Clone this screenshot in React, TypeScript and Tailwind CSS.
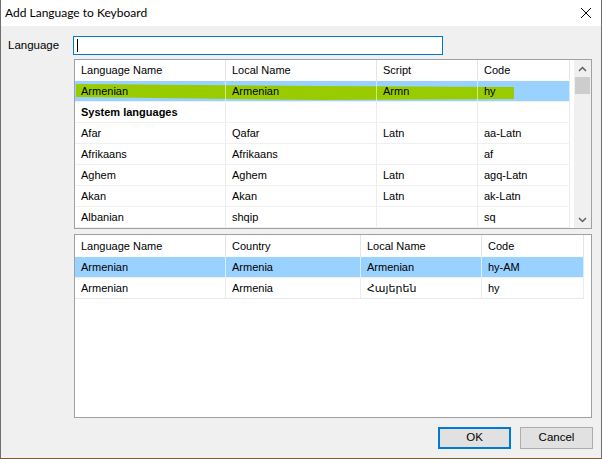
import React from "react";

const F = { fontFamily: '"Liberation Sans", "DejaVu Sans", Arial, sans-serif' };

function Cell({ w, children, bold }: { w: number; children?: React.ReactNode; bold?: boolean }) {
  return (
    <div
      className={`h-full shrink-0 flex items-center pl-[6px] whitespace-nowrap overflow-hidden border-r border-r-[rgba(200,200,200,0.35)] ${bold ? "font-bold" : ""}`}
      style={{ width: w }}
    >
      {children}
    </div>
  );
}

function HeaderCell({ w, children }: { w: number; children?: React.ReactNode }) {
  return (
    <div
      className="h-full shrink-0 flex items-center pl-[6px] whitespace-nowrap border-r border-r-[#e5e5e5]"
      style={{ width: w }}
    >
      {children}
    </div>
  );
}

const upperCols = [151, 151, 101, 92];
const lowerCols = [151, 135, 121, 102];

const upperRows: (string[] | { bold: string })[] = [
  { bold: "System languages" },
  ["Afar", "Qafar", "Latn", "aa-Latn"],
  ["Afrikaans", "Afrikaans", "", "af"],
  ["Aghem", "Aghem", "Latn", "agq-Latn"],
  ["Akan", "Akan", "Latn", "ak-Latn"],
  ["Albanian", "shqip", "", "sq"],
];

export default function App() {
  return (
    <div
      className="w-[602px] h-[459px] flex flex-col bg-[#f0f0f0] border-l border-r border-[#6e6e6e] border-b border-b-[#7a5b34] text-[11px] text-black overflow-hidden"
      style={F}
    >
      {/* Title bar */}
      <div className="h-[26px] bg-white flex items-center justify-between shrink-0">
        <span className="pl-[4px] text-[12px] text-black" style={{ fontFamily: 'Lato, "Noto Sans", sans-serif' }}>
          Add Language to Keyboard
        </span>
        <svg width="12" height="12" viewBox="0 0 12 12" className="mr-[9px]">
          <path d="M1 1 L11 11 M11 1 L1 11" stroke="#000" strokeWidth="1" />
        </svg>
      </div>

      {/* Body */}
      <div className="flex-1 flex flex-col pt-[10px]">
        <div className="flex items-center h-[19px]">
          <span className="w-[72px] pl-[7px] shrink-0 text-[11.5px]">Language</span>
          <div className="w-[370px] h-[19px] bg-white border border-[#0078d7] flex items-center pl-[3px]">
            <div className="w-px h-[13px] bg-black" />
          </div>
        </div>

        {/* Upper list */}
        <div className="mt-[4px] ml-[73px] w-[518px] h-[170px] border border-[#a0a0a0] bg-white flex">
          <div className="w-[499px] flex flex-col">
            <div className="h-[21px] flex shrink-0">
              {["Language Name", "Local Name", "Script", "Code"].map((t, i) => (
                <HeaderCell key={i} w={upperCols[i]}>{t}</HeaderCell>
              ))}
            </div>
            {/* Selected row with highlight */}
            <div className="relative h-[21px] w-[495px] bg-[#99d1ff] flex shrink-0 border-b border-b-[#f0f0f0]">
              <svg className="absolute left-0 top-0" width="495" height="21" viewBox="0 0 495 21">
                <polygon points="1,3 245,5 439,6 439,18 245,19 1,16" fill="#99cc00" />
              </svg>
              {["Armenian", "Armenian", "Armn", "hy"].map((t, i) => (
                <div
                  key={i}
                  className="relative h-full shrink-0 flex items-center pl-[6px] border-r border-r-[rgba(255,255,255,0.55)]"
                  style={{ width: upperCols[i] }}
                >
                  {t}
                </div>
              ))}
            </div>
            {upperRows.map((r, idx) => (
              <div key={idx} className="h-[21px] w-[495px] flex shrink-0 border-b border-b-[#f0f0f0]">
                {Array.isArray(r) ? (
                  r.map((t, i) => (
                    <Cell key={i} w={upperCols[i]}>{t}</Cell>
                  ))
                ) : (
                  <>
                    <Cell w={upperCols[0]} bold>{r.bold}</Cell>
                    <Cell w={upperCols[1]} />
                    <Cell w={upperCols[2]} />
                    <Cell w={upperCols[3]} />
                  </>
                )}
              </div>
            ))}
          </div>
          {/* Scrollbar */}
          <div className="w-[17px] bg-[#f0f0f0] flex flex-col items-center">
            <div className="h-[17px] w-full flex items-center justify-center">
              <svg width="9" height="6" viewBox="0 0 9 6">
                <path d="M1 5 L4.5 1.5 L8 5" stroke="#606060" strokeWidth="1.5" fill="none" />
              </svg>
            </div>
            <div className="w-[15px] h-[17px] bg-[#cdcdcd]" />
            <div className="flex-1" />
            <div className="h-[17px] w-full flex items-center justify-center">
              <svg width="9" height="6" viewBox="0 0 9 6">
                <path d="M1 1 L4.5 4.5 L8 1" stroke="#606060" strokeWidth="1.5" fill="none" />
              </svg>
            </div>
          </div>
        </div>

        {/* Lower list */}
        <div className="mt-[5px] ml-[73px] w-[518px] h-[184px] border border-[#a0a0a0] bg-white flex flex-col">
          <div className="h-[22px] flex shrink-0">
            {["Language Name", "Country", "Local Name", "Code"].map((t, i) => (
              <HeaderCell key={i} w={lowerCols[i]}>{t}</HeaderCell>
            ))}
          </div>
          <div className="h-[21px] w-[509px] flex shrink-0 bg-[#99d1ff] border-b border-b-[#f0f0f0]">
            {["Armenian", "Armenia", "Armenian", "hy-AM"].map((t, i) => (
              <div
                key={i}
                className="h-full shrink-0 flex items-center pl-[6px] border-r border-r-[rgba(255,255,255,0.6)]"
                style={{ width: lowerCols[i] }}
              >
                {t}
              </div>
            ))}
          </div>
          <div className="h-[21px] w-[509px] flex shrink-0 border-b border-b-[#e8e8e8]">
            {["Armenian", "Armenia", "Հայերեն", "hy"].map((t, i) => (
              <Cell key={i} w={lowerCols[i]}>{t}</Cell>
            ))}
          </div>
        </div>

        {/* Buttons */}
        <div className="flex justify-end gap-[9px] mt-[9px] pr-[8px]">
          <button className="w-[73px] h-[22px] bg-[#e1e1e1] border-2 border-[#0078d7] flex items-center justify-center text-[11.5px]" style={F}>
            OK
          </button>
          <button className="w-[73px] h-[22px] bg-[#e1e1e1] border border-[#adadad] flex items-center justify-center text-[11.5px]" style={F}>
            Cancel
          </button>
        </div>
      </div>
    </div>
  );
}
